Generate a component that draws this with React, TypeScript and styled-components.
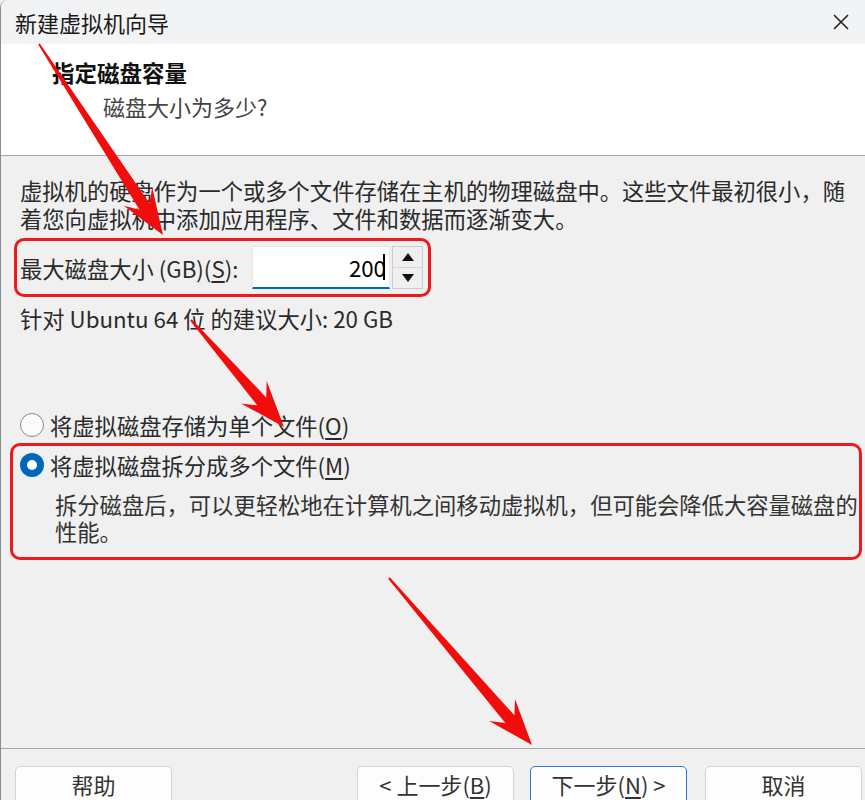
import React from "react";
import styled, { createGlobalStyle } from "styled-components";

const Global = createGlobalStyle`
  html, body { margin: 0; padding: 0; background: #f0f0f0; }
  body { font-family: "Noto Sans CJK SC", "Noto Sans", sans-serif; }
  * { box-sizing: border-box; }
`;

const Window = styled.div`
  position: relative;
  width: 865px;
  height: 800px;
  overflow: hidden;
  display: flex;
  flex-direction: column;
  background: #f0f0f0;
  border-left: 1px solid #8c8c8c;
  border-top-left-radius: 8px;
  color: #222;
  font-size: 22.3px;
`;

const TitleBar = styled.div`
  height: 44px;
  flex: none;
  display: flex;
  align-items: center;
  justify-content: space-between;
  padding: 0 12px 0 14px;
  background: #f2f3f5;
`;

const Title = styled.div`
  font-size: 22px;
  line-height: 30px;
  color: #1a1a1a;
`;

const CloseBtn = styled.div`
  width: 24px;
  height: 24px;
  display: flex;
  align-items: center;
  justify-content: center;
`;

const Header = styled.div`
  height: 112px;
  flex: none;
  background: #ffffff;
  border-bottom: 1px solid #a6a6a6;
  padding: 13px 0 0 51px;
  display: flex;
  flex-direction: column;
  gap: 4px;
`;

const Heading = styled.div`
  font-size: 22.5px;
  line-height: 30px;
  font-weight: 700;
  color: #111;
`;

const SubHeading = styled.div`
  font-size: 22px;
  line-height: 30px;
  color: #444;
  padding-left: 51px;
`;

const Body = styled.div`
  flex: 1;
  padding: 20px 0 0 19px;
  display: flex;
  flex-direction: column;
`;

const Paragraph = styled.div`
  line-height: 28px;
  white-space: nowrap;
  color: #2a2a2a;
`;

const Highlight = styled.div<{ $t: number; $r: number; $b: number; $l: number }>`
  position: relative;
  &::after {
    content: "";
    position: absolute;
    top: ${(p) => -p.$t}px;
    right: ${(p) => -p.$r}px;
    bottom: ${(p) => -p.$b}px;
    left: ${(p) => -p.$l}px;
    border: 3px solid #f01818;
    border-radius: 10px;
    pointer-events: none;
  }
`;

const SizeRow = styled.div`
  margin-top: 14px;
  height: 43px;
  display: flex;
  align-items: center;
  width: 403px;
`;

const Label = styled.div`
  width: 232px;
  line-height: 28px;
  white-space: nowrap;
  color: #2a2a2a;
`;

const U = styled.span`
  text-decoration: underline;
  text-underline-offset: 3px;
`;

const Input = styled.div`
  width: 138px;
  height: 43px;
  background: #fff;
  border: 1px solid #e6e6e6;
  border-bottom: 2px solid #0067c0;
  display: flex;
  align-items: center;
  justify-content: flex-end;
  padding-right: 4px;
  color: #000;
  line-height: 28px;
`;

const Caret = styled.span`
  display: inline-block;
  width: 2px;
  height: 26px;
  background: #000;
  margin-left: -3px;
`;

const Spinner = styled.div`
  width: 31px;
  height: 43px;
  margin-left: 2px;
  border: 1px solid #cdcdcd;
  background: #f0f0f0;
  display: flex;
  flex-direction: column;
`;

const SpinHalf = styled.div<{ $top?: boolean }>`
  flex: 1;
  display: flex;
  align-items: center;
  justify-content: center;
  border-bottom: ${(p) => (p.$top ? "1px solid #d6d6d6" : "none")};
`;

const Recommend = styled.div`
  margin-top: 15px;
  line-height: 28px;
  white-space: nowrap;
  color: #2a2a2a;
`;

const Options = styled.div`
  margin-top: 79px;
  display: flex;
  flex-direction: column;
  gap: 12px;
`;

const RadioRow = styled.div`
  display: flex;
  align-items: center;
  gap: 6px;
  height: 28px;
  line-height: 28px;
  white-space: nowrap;
  color: #2a2a2a;
`;

const RadioDot = styled.span<{ $on?: boolean }>`
  width: 24px;
  height: 24px;
  border-radius: 50%;
  flex: none;
  display: flex;
  align-items: center;
  justify-content: center;
  background: ${(p) => (p.$on ? "#0067c0" : "#fbfbfb")};
  border: ${(p) => (p.$on ? "none" : "1.5px solid #8a8a8a")};
  &::after {
    content: "";
    display: ${(p) => (p.$on ? "block" : "none")};
    width: 10px;
    height: 10px;
    border-radius: 50%;
    background: #fff;
  }
`;

const SplitGroup = styled.div`
  display: flex;
  flex-direction: column;
  gap: 12px;
  width: 842px;
`;

const Desc = styled.div`
  padding-left: 35px;
  line-height: 27px;
  color: #333;
  white-space: nowrap;
`;

const Footer = styled.div`
  height: 52px;
  flex: none;
  border-top: 1px solid #a6a6a6;
  padding: 17px 0 0 14px;
  display: flex;
  align-items: flex-start;
`;

const Button = styled.div<{ $primary?: boolean; $gap?: number }>`
  width: 157px;
  height: 44px;
  flex: none;
  margin-left: ${(p) => p.$gap ?? 0}px;
  border: 1px solid ${(p) => (p.$primary ? "#2b7bd3" : "#d3d3d3")};
  border-radius: 5px;
  background: #fdfdfd;
  display: flex;
  justify-content: center;
  padding-top: 2px;
  font-size: 22px;
  line-height: 30px;
  color: #333;
  white-space: nowrap;
`;

const Overlay = styled.svg`
  position: absolute;
  left: 0;
  top: 0;
  width: 865px;
  height: 800px;
  pointer-events: none;
`;

function arrowPoints(tx: number, ty: number, hx: number, hy: number) {
  const dx = hx - tx;
  const dy = hy - ty;
  const L = Math.hypot(dx, dy);
  const ux = dx / L;
  const uy = dy / L;
  const nx = -uy;
  const ny = ux;
  const h = 46;
  const w = 6;
  const W = 17;
  const p = (d: number, o: number) =>
    `${(tx + ux * d + nx * o).toFixed(1)},${(ty + uy * d + ny * o).toFixed(1)}`;
  return [p(0, 1), p(L - h + 12, w), p(L - h, W), p(L, 0), p(L - h, -W), p(L - h + 12, -w), p(0, -1)].join(" ");
}

const arrows = [
  [38, 44, 162, 235],
  [190, 320, 283, 427],
  [388, 578, 531, 745],
];

export default function App() {
  return (
    <>
      <Global />
      <Window>
        <TitleBar>
          <Title>新建虚拟机向导</Title>
          <CloseBtn>
            <svg width="18" height="18" viewBox="0 0 18 18">
              <path d="M2 2 L16 16 M16 2 L2 16" stroke="#222" strokeWidth="1.6" />
            </svg>
          </CloseBtn>
        </TitleBar>
        <Header>
          <Heading>指定磁盘容量</Heading>
          <SubHeading>磁盘大小为多少?</SubHeading>
        </Header>
        <Body>
          <Paragraph>虚拟机的硬盘作为一个或多个文件存储在主机的物理磁盘中。这些文件最初很小，随</Paragraph>
          <Paragraph>着您向虚拟机中添加应用程序、文件和数据而逐渐变大。</Paragraph>
          <Highlight $t={8} $r={8} $b={8} $l={6} as={SizeRow}>
            <Label>
              最大磁盘大小 (GB)(<U>S</U>):
            </Label>
            <Input>
              200
              <Caret />
            </Input>
            <Spinner>
              <SpinHalf $top>
                <svg width="12" height="8" viewBox="0 0 12 8">
                  <path d="M6 0 L12 8 L0 8 Z" fill="#111" />
                </svg>
              </SpinHalf>
              <SpinHalf>
                <svg width="12" height="8" viewBox="0 0 12 8">
                  <path d="M0 0 L12 0 L6 8 Z" fill="#111" />
                </svg>
              </SpinHalf>
            </Spinner>
          </Highlight>
          <Recommend>针对 Ubuntu 64 位 的建议大小: 20 GB</Recommend>
          <Options>
            <RadioRow>
              <RadioDot />
              <span>
                将虚拟磁盘存储为单个文件(<U>O</U>)
              </span>
            </RadioRow>
            <Highlight $t={8} $r={0} $b={15} $l={10} as={SplitGroup}>
              <RadioRow>
                <RadioDot $on />
                <span>
                  将虚拟磁盘拆分成多个文件(<U>M</U>)
                </span>
              </RadioRow>
              <Desc>
                拆分磁盘后，可以更轻松地在计算机之间移动虚拟机，但可能会降低大容量磁盘的
                <br />
                性能。
              </Desc>
            </Highlight>
          </Options>
        </Body>
        <Footer>
          <Button>帮助</Button>
          <Button $gap={185}>
            <span>
              &lt; 上一步(<U>B</U>)
            </span>
          </Button>
          <Button $primary $gap={16}>
            <span>
              下一步(<U>N</U>) &gt;
            </span>
          </Button>
          <Button $gap={18}>取消</Button>
        </Footer>
        <Overlay viewBox="0 0 865 800">
          {arrows.map(([a, b, c, d], i) => (
            <polygon key={i} points={arrowPoints(a, b, c, d)} fill="#f20d0d" />
          ))}
        </Overlay>
      </Window>
    </>
  );
}
